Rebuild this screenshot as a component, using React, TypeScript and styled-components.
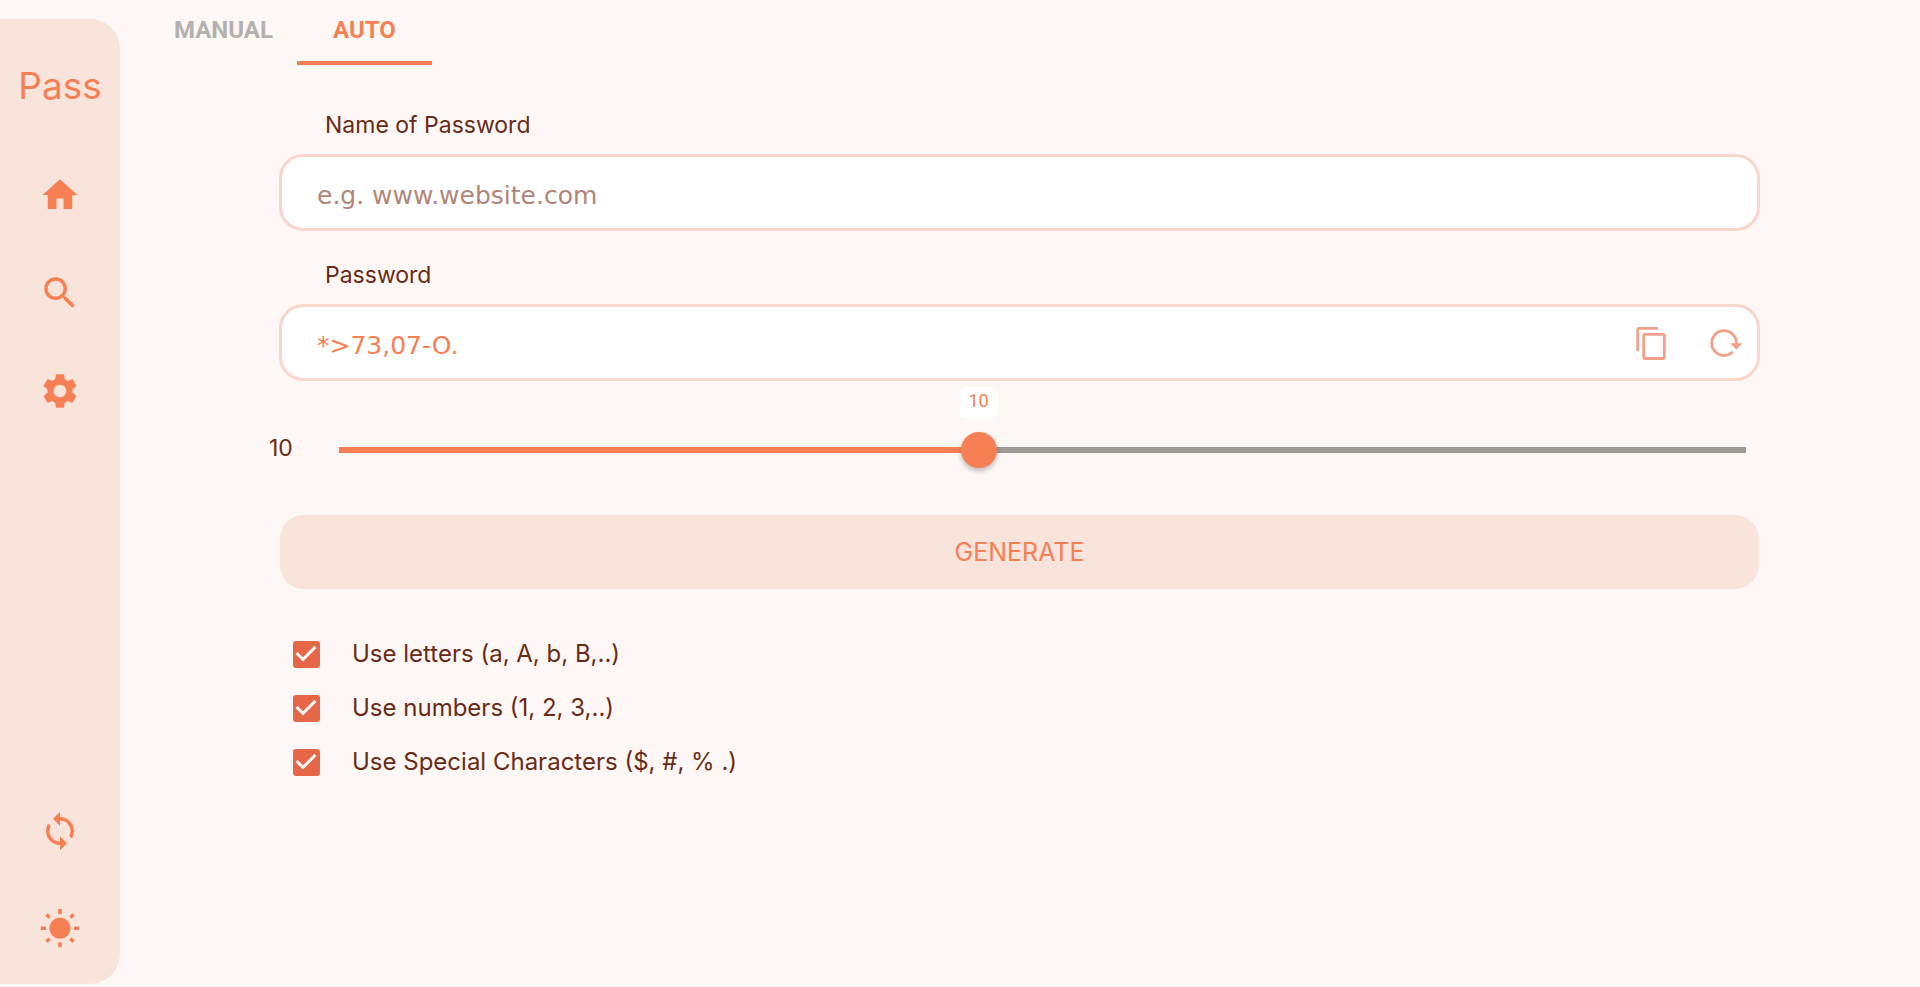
import React, { useState } from "react";
import styled, { createGlobalStyle } from "styled-components";
import { MdHome, MdSearch, MdSettings, MdSync } from "react-icons/md";

const accent = "#f77f54";
const panel = "#f8e4db";
const page = "#fdf8f5";
const ink = "#6b2a17";
const round = "Inter, 'Liberation Sans', sans-serif";

const GlobalStyle = createGlobalStyle`
  *, *::before, *::after { box-sizing: border-box; }
  body { margin: 0; background: ${page}; color: ${ink}; font-family: ${round}; }
  button { border: 0; padding: 0; background: none; cursor: pointer; }
`;

const Shell = styled.div`
  display: flex;
  min-height: 100vh;
`;

const Sidebar = styled.nav`
  display: flex;
  flex-direction: column;
  justify-content: space-between;
  align-items: center;
  flex: 0 0 120px;
  margin: 19px 0 3px;
  padding: 43px 0 34px;
  border-radius: 0 30px 30px 0;
  background: ${panel};
`;

const Brand = styled.div`
  margin-bottom: 64px;
  color: ${accent};
  font-size: 37px;
  line-height: 48px;
  text-align: center;
`;

const IconGroup = styled.div`
  display: flex;
  flex-direction: column;
  align-items: center;
  gap: 56px;
`;

const IconButton = styled.button`
  display: flex;
  color: ${accent};
  svg { width: 42px; height: 42px; }
`;

const Main = styled.main`
  flex: 1;
  min-width: 0;
`;

const Tabs = styled.div`
  display: flex;
  padding-left: 30px;
`;

const Tab = styled.button<{ $active?: boolean }>`
  height: 65px;
  width: ${(p) => (p.$active ? 135 : 147)}px;
  padding-bottom: 2px;
  border-bottom: 4px solid ${(p) => (p.$active ? accent : "transparent")};
  color: ${(p) => (p.$active ? accent : "#b3b1af")};
  font: 700 24px Roboto, sans-serif;
`;

const Form = styled.form`
  display: flex;
  flex-direction: column;
  margin: 47px 160px 0 159px;
`;

const Field = styled.div`
  display: flex;
  flex-direction: column;
  margin-bottom: 31px;
`;

const FieldLabel = styled.label`
  margin-bottom: 16px;
  padding-left: 46px;
  font-size: 23px;
  line-height: 26px;
`;

const InputBox = styled.div`
  display: flex;
  align-items: center;
  height: 77px;
  padding: 0 13px 0 35px;
  gap: 39px;
  border: 3px solid #f9d6cc;
  border-radius: 24px;
  background: #fff;
`;

const TextInput = styled.input`
  flex: 1;
  min-width: 0;
  padding: 6px 0 0;
  border: 0;
  outline: 0;
  background: none;
  color: ${accent};
  font: 25px "DejaVu Sans", sans-serif;
  &::placeholder { color: #b08678; opacity: 1; }
`;

const SliderRow = styled.div`
  display: flex;
  align-items: center;
  height: 36px;
  margin: 20px 14px 47px -10px;
`;

const SliderValue = styled.output`
  flex: 0 0 70px;
  padding-bottom: 4px;
  font-size: 23px;
  line-height: 32px;
`;

const SliderWrap = styled.div`
  position: relative;
  flex: 1;
  display: flex;
  background: linear-gradient(${accent}, ${accent}) 0 50% / var(--fill) 6px no-repeat,
    linear-gradient(#a09a96, #a09a96) 0 50% / 100% 6px no-repeat;
`;

const Range = styled.input`
  appearance: none;
  flex: 1;
  height: 36px;
  margin: 0 -18px;
  background: none;
  &::-webkit-slider-thumb {
    appearance: none;
    width: 36px;
    height: 36px;
    border-radius: 50%;
    background: ${accent};
    box-shadow: 0 3px 5px rgba(0, 0, 0, 0.25);
  }
`;

const Bubble = styled.span`
  position: absolute;
  bottom: 50px;
  left: var(--fill);
  transform: translateX(-50%);
  width: 38px;
  height: 31px;
  border-radius: 6px;
  background: #fff;
  color: ${accent};
  font: 18px/28px Roboto, sans-serif;
  text-align: center;
`;

const Generate = styled.button`
  height: 74px;
  margin: 0 1px;
  border-radius: 24px;
  && { background: ${panel}; }
  color: ${accent};
  font: 25px ${round};
`;

const Options = styled.fieldset`
  display: flex;
  flex-direction: column;
  gap: 18px;
  margin: 47px 0 0 9px;
  padding: 0;
  border: 0;
`;

const Option = styled.label`
  display: flex;
  align-items: center;
  gap: 28px;
  font-size: 24px;
  line-height: 36px;
`;

const CheckCell = styled.span`
  display: grid;
  place-items: center;
  width: 36px;
  height: 36px;
  > * { grid-area: 1 / 1; }
  svg { width: 36px; height: 36px; pointer-events: none; fill: ${page}; }
  input:not(:checked) + svg { visibility: hidden; }
`;

const Check = styled.input`
  appearance: none;
  width: 27px;
  height: 27px;
  margin: 0;
  border: 3px solid #e66748;
  border-radius: 3px;
  &:checked { background: #e66748; }
`;

const SunIcon = () => (
  <svg viewBox="0 0 24 24" fill="currentColor" aria-hidden="true">
    <path d="M6.76 4.84l-1.8-1.79-1.41 1.41 1.79 1.79 1.42-1.41zM4 10.5H1v2h3v-2zm9-9.95h-2V3.5h2V.55zm7.45 3.91l-1.41-1.41-1.79 1.79 1.41 1.41 1.79-1.79zm-3.21 13.7l1.79 1.8 1.41-1.41-1.8-1.79-1.4 1.4zM20 10.5v2h3v-2h-3zm-8-5c-3.31 0-6 2.69-6 6s2.69 6 6 6 6-2.69 6-6-2.69-6-6-6zm-1 16.95h2V19.5h-2v2.95zm-7.45-3.91l1.41 1.41 1.79-1.8-1.41-1.41-1.79 1.8z" />
  </svg>
);

const ActionButton = styled.button`
  display: flex;
  color: #f3a088;
`;

const CopyIcon = () => (
  <svg width="36" height="36" viewBox="0 0 36 36" fill="none" stroke="currentColor" strokeWidth="2.8" aria-hidden="true">
    <path d="M4.7 26V5q0-1.700 1.700-1.700H25" />
    <rect x="10.700" y="9.300" width="20.600" height="24.200" rx="1.500" />
  </svg>
);

const ReloadIcon = () => (
  <svg width="36" height="36" viewBox="0 0 36 36" fill="none" stroke="currentColor" strokeWidth="2.8" aria-hidden="true">
    <path d="M24.800 26.800A12.400 12.400 0 1 1 28.400 19" />
    <path d="M22.200 18.200h12.200l-6.100 6.200z" fill="currentColor" stroke="none" />
  </svg>
);

const options = [
  "Use letters (a, A, b, B,..)",
  "Use numbers (1, 2, 3,..)",
  "Use Special Characters ($, #, % .)",
];

const minLength = 5;
const maxLength = 16;

export default function App() {
  const [name, setName] = useState("");
  const [password, setPassword] = useState("*>73,07-O.");
  const [length, setLength] = useState(10);
  const fill = `${((length - minLength) / (maxLength - minLength)) * 100}%`;

  return (
    <Shell>
      <GlobalStyle />
      <Sidebar>
        <div>
          <Brand>Pass</Brand>
          <IconGroup>
            <IconButton aria-label="Home"><MdHome /></IconButton>
            <IconButton aria-label="Search"><MdSearch /></IconButton>
            <IconButton aria-label="Settings"><MdSettings /></IconButton>
          </IconGroup>
        </div>
        <IconGroup>
          <IconButton aria-label="Sync"><MdSync /></IconButton>
          <IconButton aria-label="Light theme"><SunIcon /></IconButton>
        </IconGroup>
      </Sidebar>
      <Main>
        <Tabs role="tablist">
          <Tab role="tab" aria-selected={false}>MANUAL</Tab>
          <Tab role="tab" aria-selected $active>AUTO</Tab>
        </Tabs>
        <Form onSubmit={(e) => e.preventDefault()}>
          <Field>
            <FieldLabel htmlFor="name">Name of Password</FieldLabel>
            <InputBox>
              <TextInput id="name" placeholder="e.g. www.website.com" value={name} onChange={(e) => setName(e.target.value)} />
            </InputBox>
          </Field>
          <Field>
            <FieldLabel htmlFor="password">Password</FieldLabel>
            <InputBox>
              <TextInput id="password" value={password} onChange={(e) => setPassword(e.target.value)} />
              <ActionButton type="button" aria-label="Copy"><CopyIcon /></ActionButton>
              <ActionButton type="button" aria-label="Regenerate"><ReloadIcon /></ActionButton>
            </InputBox>
          </Field>
          <SliderRow>
            <SliderValue htmlFor="length">{length}</SliderValue>
            <SliderWrap style={{ "--fill": fill } as React.CSSProperties}>
              <Range
                id="length"
                type="range"
                aria-label="Password length"
                min={minLength}
                max={maxLength}
                value={length}
                onChange={(e) => setLength(Number(e.target.value))}
              />
              <Bubble>{length}</Bubble>
            </SliderWrap>
          </SliderRow>
          <Generate type="submit">GENERATE</Generate>
          <Options>
            {options.map((text) => (
              <Option key={text}>
                <CheckCell>
                  <Check type="checkbox" defaultChecked />
                  <svg viewBox="0 0 24 24" aria-hidden="true">
                    <path d="M10 17l-5-5 1.410-1.410L10 14.170l7.590-7.590L19 8l-9 9z" />
                  </svg>
                </CheckCell>
                {text}
              </Option>
            ))}
          </Options>
        </Form>
      </Main>
    </Shell>
  );
}
